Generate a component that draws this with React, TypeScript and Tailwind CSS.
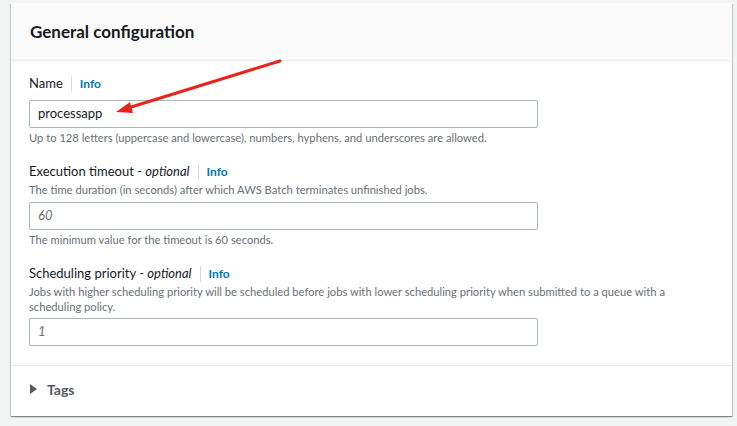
import { ReactNode } from "react";

const font = { fontFamily: "Lato, 'Open Sans', Arial, sans-serif" };

const Label = ({ children, optional }: { children: ReactNode; optional?: boolean }) => (
  <div className="flex items-center h-5 text-[13px] text-[#16191f]">
    <span>
      {children}
      {optional && (
        <>
          {" - "}
          <i>optional</i>
        </>
      )}
    </span>
    <span className="mx-2 h-4 w-px bg-[#d5dbdb]" />
    <a className="text-[12px] font-bold text-[#0073bb]">Info</a>
  </div>
);

const Input = ({ value, placeholder }: { value?: string; placeholder?: string }) => (
  <div className="w-[509px] h-[28px] border border-[#aab7b8] rounded-[2px] bg-white flex items-center px-2 text-[13px]">
    {value ? (
      <span className="text-[#16191f]">{value}</span>
    ) : (
      <span className="italic text-[#687078]">{placeholder}</span>
    )}
  </div>
);

export default function App() {
  return (
    <div className="w-[737px] h-[426px] bg-[#f2f3f3] pt-[3px] pl-[11px] relative" style={font}>
      <div className="w-[721px] bg-white shadow-[0_1px_1px_0_rgba(0,28,36,0.3),1px_1px_1px_0_rgba(0,28,36,0.15),-1px_1px_1px_0_rgba(0,28,36,0.15)]">
        {/* Header */}
        <div className="h-[58px] bg-[#fafafa] border-b border-[#eaeded] flex items-center px-[19px]">
          <h2 className="text-[17px] font-bold text-[#16191f]">General configuration</h2>
        </div>

        {/* Body */}
        <div className="pt-[13px] px-[18px] pb-[19px] border-b border-[#eaeded]">
          <Label>Name</Label>
          <div className="mt-[6px]">
            <Input value="processapp" />
          </div>
          <p className="mt-[2px] text-[11.2px] leading-4 text-[#687078]">
            Up to 128 letters (uppercase and lowercase), numbers, hyphens, and underscores are allowed.
          </p>

          <div className="mt-4">
            <Label optional>Execution timeout</Label>
            <p className="text-[11.2px] leading-4 text-[#687078]">
              The time duration (in seconds) after which AWS Batch terminates unfinished jobs.
            </p>
            <div className="mt-1">
              <Input placeholder="60" />
            </div>
            <p className="mt-[2px] text-[11.2px] leading-4 text-[#687078]">
              The minimum value for the timeout is 60 seconds.
            </p>
          </div>

          <div className="mt-4">
            <Label optional>Scheduling priority</Label>
            <p className="text-[11.2px] leading-[15px] text-[#687078]">
              Jobs with higher scheduling priority will be scheduled before jobs with lower scheduling priority when
              submitted to a queue with a scheduling policy.
            </p>
            <div className="mt-1">
              <Input placeholder="1" />
            </div>
          </div>
        </div>

        {/* Tags */}
        <div className="h-[50px] flex items-center px-[19px] pb-[4px] gap-[10px]">
          <svg width="7" height="10" viewBox="0 0 7 10">
            <path d="M0 0 L7 5 L0 10 Z" fill="#545b64" />
          </svg>
          <span className="text-[14px] font-bold text-[#545b64]">Tags</span>
        </div>
      </div>

      {/* Annotation arrow */}
      <svg className="absolute left-0 top-0 pointer-events-none" width="737" height="426">
        <line x1="280" y1="61" x2="128" y2="108" stroke="#e8231c" strokeWidth="3" strokeLinecap="round" />
        <path d="M116 112 L130 102 L133 113 Z" fill="#e8231c" />
      </svg>
    </div>
  );
}
